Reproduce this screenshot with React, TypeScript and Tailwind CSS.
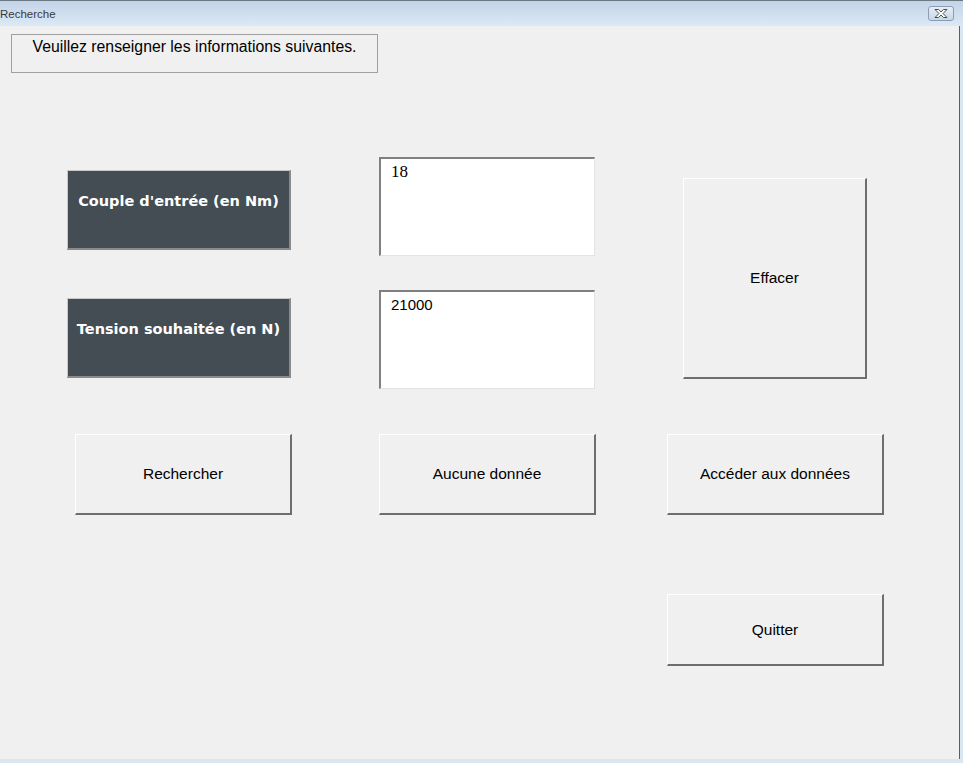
import React from 'react';

const sans = { fontFamily: '"Liberation Sans", Arial, sans-serif' };

// raised 3d button, classic VBA UserForm look
const RaisedButton: React.FC<{ label: string; className?: string }> = ({ label, className = '' }) => (
  <button
    className={`flex items-center justify-center bg-[#f0f0f0] text-[15.5px] text-black border-t border-l border-t-white border-l-white border-b-2 border-r-2 border-b-[#6e6e6e] border-r-[#6e6e6e] ${className}`}
    style={sans}
  >
    {label}
  </button>
);

const DarkLabel: React.FC<{ label: string }> = ({ label }) => (
  <div
    className="h-[80px] w-[224px] bg-[#434d53] pt-[20px] text-center text-[14.5px] leading-[20px] font-bold text-white border-t border-l border-t-[#c8c8c8] border-l-[#c8c8c8] border-b-2 border-r-2 border-b-[#8a8a8a] border-r-[#8a8a8a]"
    style={{ fontFamily: '"DejaVu Sans", Verdana, sans-serif' }}
  >
    {label}
  </div>
);

const TextBox: React.FC<{ value: string; serif?: boolean; className?: string }> = ({ value, serif, className = '' }) => (
  <div
    className={`h-[99px] w-[216px] bg-white pl-[10px] leading-[20px] border-t-2 border-l-2 border-t-[#808080] border-l-[#808080] border-b border-r border-b-[#e3e3e3] border-r-[#e3e3e3] ${serif ? 'pt-[2px]' : 'pt-[2px]'} ${className}`}
  >
    <span
      className={serif ? 'text-[17px] text-black' : 'text-[15px] text-black'}
      style={serif ? { fontFamily: '"Liberation Serif", "Times New Roman", serif' } : sans}
    >
      {value}
    </span>
  </div>
);

export default function App() {
  return (
    <div className="flex h-[763px] w-[963px] flex-col overflow-hidden bg-[#dbe6f3]">
      {/* Title bar */}
      <div className="flex h-[26px] shrink-0 items-center justify-between border-t border-t-[#6d7885] bg-gradient-to-b from-[#c3d4e7] to-[#dce8f5] pr-[9px]">
        <span className="pt-[3px] text-[11.5px] leading-none text-[#3a3a3a]" style={sans}>
          Recherche
        </span>
        <div className="flex h-[15px] w-[26px] items-center justify-center rounded-[3px] border border-[#8c9db2] bg-gradient-to-b from-[#e6eef7] to-[#c9d7e6]">
          <svg width="14" height="9" viewBox="0 0 14 9">
            <path
              d="M1 0.5 H4.5 L7 3 L9.5 0.5 H13 L9 4.5 L13 8.5 H9.5 L7 6 L4.5 8.5 H1 L5 4.5 Z"
              fill="#ffffff"
              stroke="#3b3b3b"
              strokeWidth="0.9"
              strokeLinejoin="round"
            />
          </svg>
        </div>
      </div>

      {/* Form body */}
      <div className="flex flex-1 border-r-[3px] border-b-[4px] border-r-[#dbe6f3] border-b-[#dbe6f3]">
        <div className="flex flex-1 flex-col bg-[#f0f0f0]">
          <div
            className="ml-[11px] mt-[8px] h-[39px] w-[367px] border border-[#a0a0a0] pt-[2px] text-center text-[15.8px] leading-[20px] text-black"
            style={sans}
          >
            Veuillez renseigner les informations suivantes.
          </div>

          <div className="flex">
            {/* Left column */}
            <div className="ml-[67px] flex w-[225px] flex-col">
              <div className="mt-[97px]">
                <DarkLabel label="Couple d'entrée (en Nm)" />
              </div>
              <div className="mt-[48px]">
                <DarkLabel label="Tension souhaitée (en N)" />
              </div>
              <RaisedButton label="Rechercher" className="ml-[8px] mt-[56px] h-[81px] w-[217px]" />
            </div>

            {/* Middle column */}
            <div className="ml-[87px] flex w-[217px] flex-col">
              <TextBox value="18" serif className="mt-[84px]" />
              <TextBox value="21000" className="mt-[34px]" />
              <RaisedButton label="Aucune donnée" className="mt-[45px] h-[81px] w-[217px]" />
            </div>

            {/* Right column */}
            <div className="ml-[71px] flex w-[217px] flex-col">
              <RaisedButton label="Effacer" className="ml-[16px] mt-[105px] h-[201px] w-[184px]" />
              <RaisedButton label="Accéder aux données" className="mt-[55px] h-[81px] w-[217px]" />
              <RaisedButton label="Quitter" className="mt-[79px] h-[72px] w-[217px]" />
            </div>
          </div>
        </div>
        <div className="w-px shrink-0 bg-[#555d66]" />
      </div>
    </div>
  );
}
